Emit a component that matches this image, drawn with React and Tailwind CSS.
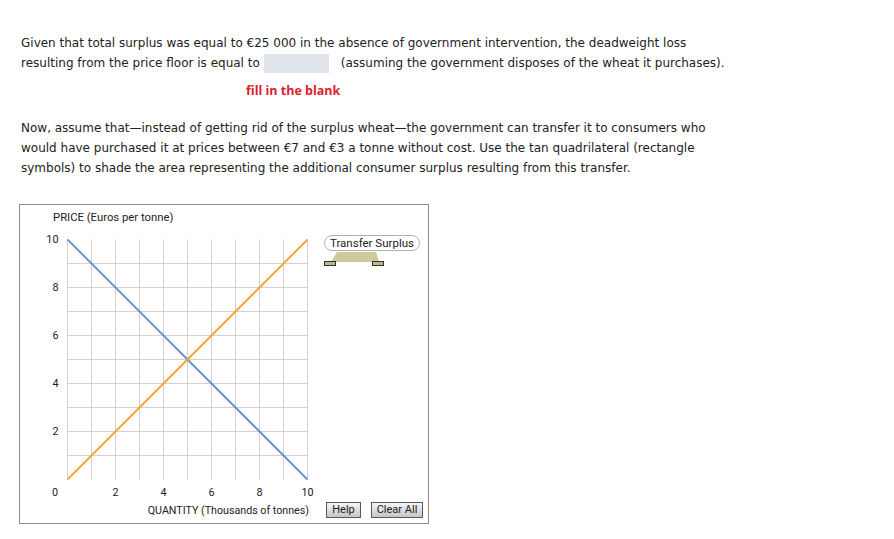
import React from "react";

function Graph() {
  const ox = 47.5, oy = 274.5, s = 24;
  const vlines = [];
  for (let i = 0; i <= 10; i++) {
    vlines.push(<line key={"v" + i} x1={ox + i * s} y1={oy - 10 * s} x2={ox + i * s} y2={oy} stroke="#d2d2d2" strokeWidth="1" />);
  }
  const hlines = [];
  for (let j = 1; j <= 9; j++) {
    hlines.push(<line key={"h" + j} x1={ox} y1={oy - j * s} x2={ox + 10 * s} y2={oy - j * s} stroke="#d2d2d2" strokeWidth="1" />);
  }
  const yl = [10, 8, 6, 4, 2];
  const xl = [2, 4, 6, 8, 10];
  const font = { fontFamily: "Roboto, 'DejaVu Sans Condensed', sans-serif", fontSize: 10.8, fill: "#222" };
  return (
    <svg width="300" height="318" className="shrink-0">
      <text x="33" y="16" style={{ ...font, fontSize: 11.3 }}>PRICE (Euros per tonne)</text>
      {vlines}
      {hlines}
      <line x1={ox} y1={oy - 10 * s} x2={ox + 10 * s} y2={oy} stroke="#6f94c6" strokeWidth="2" />
      <line x1={ox} y1={oy} x2={ox + 10 * s} y2={oy - 10 * s} stroke="#f0a838" strokeWidth="2" />
      {yl.map((v) => (
        <text key={"y" + v} x="38.5" y={oy - v * s + 3.8} textAnchor="end" style={font}>{v}</text>
      ))}
      <text x="35" y="291" textAnchor="middle" style={font}>0</text>
      {xl.map((v) => (
        <text key={"x" + v} x={ox + v * s} y="291" textAnchor="middle" style={font}>{v}</text>
      ))}
      <text x="289" y="309" textAnchor="end" style={{ ...font, fontSize: 10.7 }}>QUANTITY (Thousands of tonnes)</text>
    </svg>
  );
}

export default function App() {
  return (
    <div className="w-[894px] h-[539px] bg-white text-[#222] overflow-hidden">
      <div className="pl-[21px] pt-[34px] font-['DejaVu_Sans',Verdana,sans-serif] text-[12px] leading-[19.5px]">
        <p className="whitespace-nowrap">Given that total surplus was equal to €25 000 in the absence of government intervention, the deadweight loss</p>
        <div className="flex items-center whitespace-nowrap">
          <span>resulting from the price floor is equal to</span>
          <span className="ml-[4px] inline-block w-[65px] h-[19px] bg-[#dfe5ea]"></span>
          <span className="ml-[12px]">(assuming the government disposes of the wheat it purchases).</span>
        </div>
        <div className="pl-[225px] pt-[8px] font-['Open_Sans',sans-serif] font-bold text-[12.5px] text-[#d8222d]">fill in the blank</div>
        <p className="mt-[17px] whitespace-nowrap leading-[20px]">
          Now, assume that—instead of getting rid of the surplus wheat—the government can transfer it to consumers who<br />
          would have purchased it at prices between €7 and €3 a tonne without cost. Use the tan quadrilateral (rectangle<br />
          symbols) to shade the area representing the additional consumer surplus resulting from this transfer.
        </p>
      </div>
      <div className="ml-[19px] mt-[26px] w-[410px] h-[320px] border border-[#8a8a8a] flex">
        <Graph />
        <div className="flex-1 flex flex-col font-['Roboto',sans-serif] text-[11px]">
          <div className="pl-[4px] pt-[30px]">
            <div className="inline-block rounded-full border border-[#b0b0b0] px-[5px] h-[16px] leading-[14px] text-[#222] text-[11.5px] whitespace-nowrap">Transfer Surplus</div>
            <svg width="64" height="16" className="block -ml-[1px] -mt-[1px]">
              <polygon points="14,1 53,1 56,11 8,11" fill="#cdca9c" />
              <rect x="1.5" y="10.5" width="11" height="4" fill="#b8bb8a" stroke="#333" strokeWidth="1" />
              <rect x="49.5" y="10.5" width="11" height="4" fill="#b8bb8a" stroke="#333" strokeWidth="1" />
            </svg>
          </div>
          <div className="mt-auto flex justify-end gap-[10px] pr-[5px] pb-[5px]">
            <button className="w-[35px] h-[16px] border border-[#5a5a5a] bg-linear-to-b from-[#f6f6f6] to-[#c6c6c6] text-[11px] leading-[14px] text-[#222]">Help</button>
            <button className="w-[52px] h-[16px] border border-[#5a5a5a] bg-linear-to-b from-[#f6f6f6] to-[#c6c6c6] text-[11px] leading-[14px] text-[#222] whitespace-nowrap">Clear All</button>
          </div>
        </div>
      </div>
    </div>
  );
}
